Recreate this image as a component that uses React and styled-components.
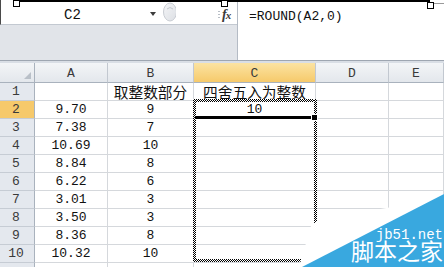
import React from "react";
import styled, { createGlobalStyle } from "styled-components";

const Global = createGlobalStyle`
  html, body { margin: 0; padding: 0; background: #fff; }
  body { width: 444px; height: 267px; overflow: hidden; }
`;

const MONO = `"Liberation Mono", "Noto Sans CJK SC", monospace`;
const CJK = `"Noto Sans CJK SC", "Noto Sans", sans-serif`;

const Page = styled.div`
  position: relative;
  width: 444px;
  height: 267px;
  overflow: hidden;
  background: #fff;
`;

const FormulaBar = styled.div`
  display: flex;
  height: 61px;
  box-sizing: border-box;
  border-bottom: 1px solid #9ea6b1;
`;

const LeftPane = styled.div`
  width: 238px;
  box-sizing: border-box;
  border-right: 1px solid #b4bbc5;
  display: flex;
  flex-direction: column;
  background: #e1e4e9;
`;

const NameRow = styled.div`
  height: 25px;
  box-sizing: border-box;
  border-bottom: 1px solid #c3c9d1;
  border-left: 1px solid #4a4a4a;
  background: #fff;
  display: flex;
  align-items: center;
  padding-top: 6px;
`;

const NameBox = styled.div`
  width: 143px;
  text-align: center;
  font-family: ${MONO};
  font-size: 14px;
  color: #111;
  line-height: 16px;
`;

const Arrow = styled.div`
  width: 0;
  height: 0;
  margin-left: 6px;
  margin-top: -2px;
  border-left: 3px solid transparent;
  border-right: 3px solid transparent;
  border-top: 4px solid #3c3c3c;
`;

const CircleBtn = styled.svg`
  margin-left: 6px;
  margin-top: -6px;
  flex: none;
`;

const Splitter = styled.div`
  margin-left: 42px;
  width: 2px;
  height: 8px;
  background: repeating-linear-gradient(#b8bec6 0 1px, transparent 1px 3px);
`;

const Fx = styled.div`
  margin-left: 2px;
  font-family: "Liberation Serif", serif;
  font-style: italic;
  font-weight: bold;
  font-size: 14px;
  color: #3a3a3a;
  letter-spacing: -1px;
  line-height: 14px;
  span { font-size: 11px; }
`;

const FormulaInput = styled.div`
  flex: 1;
  background: #fff;
  font-family: ${MONO};
  font-size: 13px;
  color: #111;
  padding: 10px 0 0 11px;
  line-height: 14px;
`;

const Separator = styled.div`
  height: 2px;
  background: #d9dee5;
`;

const SheetWrap = styled.div`
  position: relative;
`;

const Grid = styled.div`
  display: grid;
  grid-template-columns: 35px 73px 86px 122px 73px 1fr;
  grid-template-rows: 20px;
  grid-auto-rows: 18px;
`;

const Cell = styled.div`
  box-sizing: border-box;
  border-right: 1px solid #d5d8dc;
  border-bottom: 1px solid #d5d8dc;
  display: flex;
  align-items: center;
  justify-content: center;
  font-family: ${(p) => (p.$cjk ? CJK : MONO)};
  font-size: ${(p) => (p.$cjk ? "14.7px" : "13px")};
  color: #111;
  white-space: nowrap;
  line-height: 16px;
`;

const ColHead = styled.div`
  box-sizing: border-box;
  border-right: 1px solid #c2c8d0;
  border-bottom: 1px solid #a9b2bd;
  display: flex;
  align-items: center;
  justify-content: center;
  padding-top: 1px;
  font-family: ${MONO};
  font-size: 13px;
  color: #3a3a3a;
  background: ${(p) =>
    p.$active
      ? "linear-gradient(#fbe3a2, #f6ca6b)"
      : "linear-gradient(#f3f5f7, #e3e7ec)"};
`;

const Corner = styled(ColHead)`
  position: relative;
  border-right-color: #a9b2bd;
  &::after {
    content: "";
    position: absolute;
    right: 3px;
    bottom: 3px;
    width: 0;
    height: 0;
    border-left: 7px solid transparent;
    border-bottom: 7px solid #b9c0c8;
  }
`;

const RowHead = styled.div`
  box-sizing: border-box;
  border-right: 1px solid #a9b2bd;
  border-bottom: 1px solid #c6ccd4;
  display: flex;
  align-items: center;
  justify-content: center;
  font-family: ${MONO};
  font-size: 13px;
  color: #3a3a3a;
  padding-right: 2px;
  background: ${(p) => (p.$active ? "#f6c96b" : "#e4e8ee")};
`;

const Ants = styled.div`
  position: absolute;
  background: repeating-conic-gradient(#000 0 25%, #fff 0 50%) 0 0 / 2px 2px;
`;

const ActiveEdge = styled.div`
  position: absolute;
  left: 195px;
  top: 53px;
  width: 118px;
  height: 3px;
  background: #000;
`;

const FillHandle = styled.div`
  position: absolute;
  left: 311px;
  top: 51px;
  width: 5px;
  height: 5px;
  background: #000;
  border: 1px solid #fff;
`;

const Watermark = styled.svg`
  position: absolute;
  left: 296px;
  top: 186px;
`;

const CropLine = styled.div`
  position: absolute;
  left: 16px;
  top: 0;
  width: 414px;
  height: 2px;
  background: #000;
`;

const CropGuide = styled.div`
  position: absolute;
  left: 430px;
  top: 3px;
  width: 14px;
  height: 1px;
  background: #9a9a9a;
`;

const Handle = styled.div`
  position: absolute;
  left: ${(p) => p.$x}px;
  top: ${(p) => p.$y}px;
  width: 5px;
  height: 5px;
  background: #fff;
  border: 1px solid #000;
`;

const rows = [
  ["", "取整数部分", "四舍五入为整数"],
  ["9.70", "9", "10"],
  ["7.38", "7", ""],
  ["10.69", "10", ""],
  ["8.84", "8", ""],
  ["6.22", "6", ""],
  ["3.01", "3", ""],
  ["3.50", "3", ""],
  ["8.36", "8", ""],
  ["10.32", "10", ""],
  ["", "", ""],
];

const isCjk = (s) => /[\u4e00-\u9fff]/.test(s);

export default function App() {
  return (
    <Page>
      <Global />
      <FormulaBar>
        <LeftPane>
          <NameRow>
            <NameBox>C2</NameBox>
            <Arrow />
            <CircleBtn width="14" height="20" viewBox="0 0 14 20">
              <defs>
                <linearGradient id="cb" x1="0" y1="0" x2="1" y2="1">
                  <stop offset="0" stopColor="#f4f5f7" />
                  <stop offset="1" stopColor="#dcdfe4" />
                </linearGradient>
              </defs>
              <ellipse cx="8" cy="10" rx="6.5" ry="9" fill="url(#cb)" stroke="#c9cdd3" strokeWidth="1" />
              <path d="M5 7 Q8 4 11 7" fill="none" stroke="#c2c6cc" strokeWidth="1" />
            </CircleBtn>
            <Splitter />
            <Fx>f<span>x</span></Fx>
          </NameRow>
        </LeftPane>
        <FormulaInput>=ROUND(A2,0)</FormulaInput>
      </FormulaBar>
      <Separator />
      <SheetWrap>
        <Grid>
          <Corner />
          {["A", "B", "C", "D", "E"].map((c) => (
            <ColHead key={c} $active={c === "C"}>{c}</ColHead>
          ))}
          {rows.map((r, i) => (
            <React.Fragment key={i}>
              <RowHead $active={i === 1}>{i < 10 ? i + 1 : ""}</RowHead>
              {r.map((v, j) => (
                <Cell key={j} $cjk={isCjk(v)}>{v}</Cell>
              ))}
              <Cell />
              <Cell />
            </React.Fragment>
          ))}
        </Grid>
        <Ants style={{ left: 193, top: 36, width: 124, height: 3 }} />
        <Ants style={{ left: 193, top: 36, width: 3, height: 163 }} />
        <Ants style={{ left: 314, top: 36, width: 3, height: 163 }} />
        <Ants style={{ left: 193, top: 196, width: 124, height: 3 }} />
        <ActiveEdge />
        <FillHandle />
      </SheetWrap>
      <Watermark width="148" height="81" viewBox="0 0 148 81">
        <polygon points="3,81 15,40 22,34 96,21 148,8 148,81" fill="#fff" />
        <polygon points="6,81 148,8 148,81" fill="#39a8df" />
        <text
          x="147"
          y="53"
          textAnchor="end"
          fill="#fff"
          fontFamily="Liberation Mono, monospace"
          fontSize="14"
        >
          jb51.net
        </text>
        <text
          x="147"
          y="74"
          textAnchor="end"
          fill="#fff"
          fontFamily="Noto Sans CJK SC, sans-serif"
          fontSize="23"
        >
          脚本之家
        </text>
      </Watermark>
      <CropLine />
      <CropGuide />
      <Handle $x={13} $y={0} />
      <Handle $x={221} $y={0} />
      <Handle $x={427} $y={2} />
    </Page>
  );
}
